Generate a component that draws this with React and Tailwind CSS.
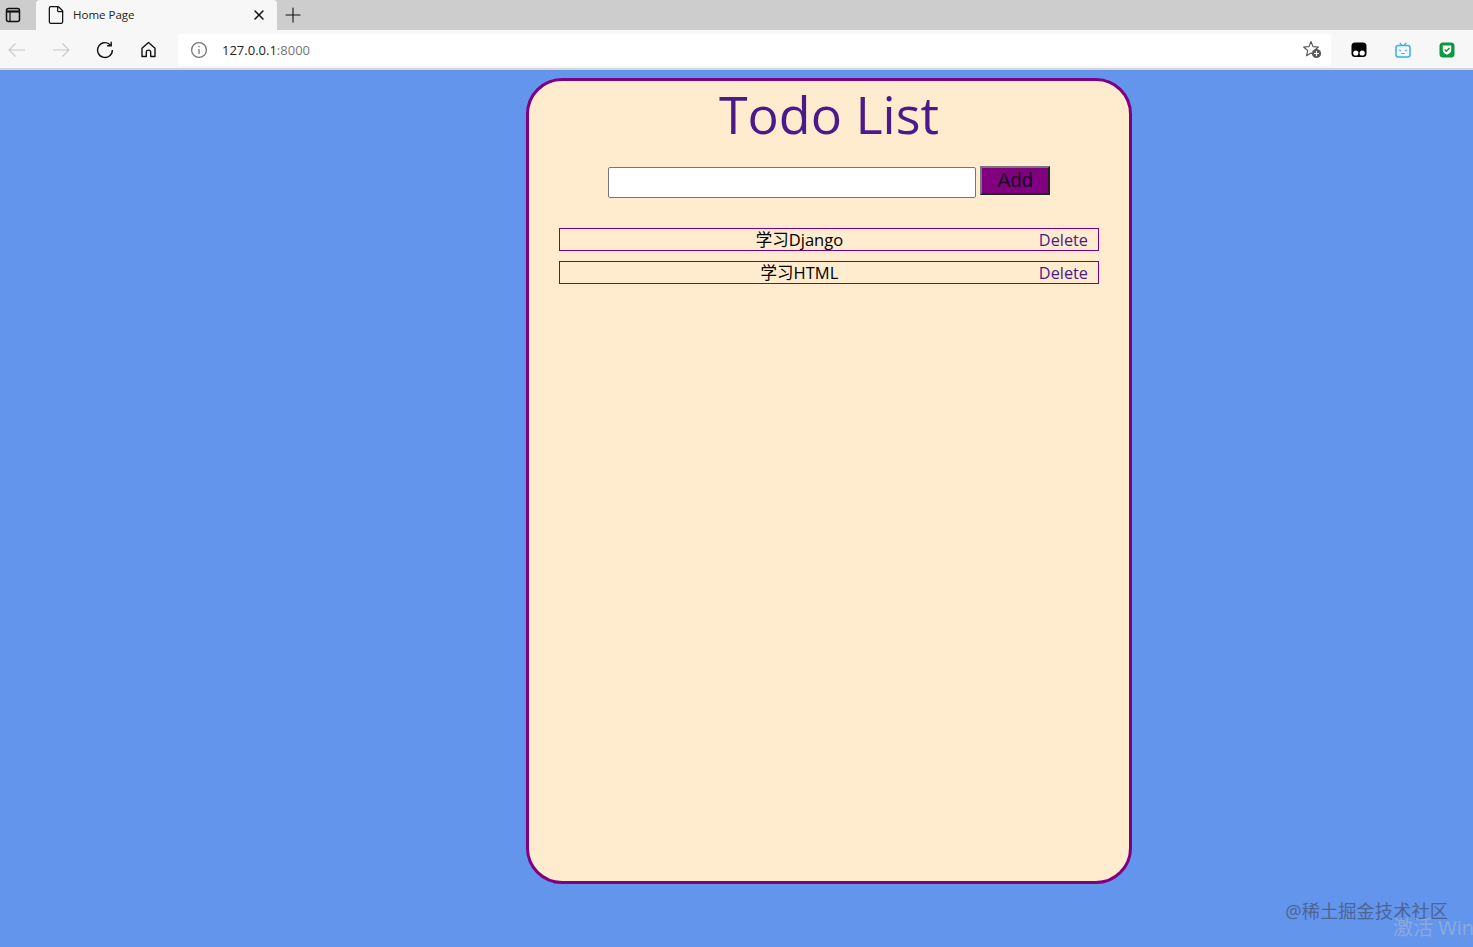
import React from 'react';
import { File, X, Plus } from 'lucide-react';

const cjk = "font-['Open_Sans','Noto_Sans_CJK_SC',sans-serif]";

const Tabs = () => (
  <div className="h-[30px] bg-[#cdcdcd] flex items-stretch">
    <div className="w-[36px] flex items-center pl-[5px]">
      <svg width="16" height="16" viewBox="0 0 16 16" fill="none" stroke="#111" strokeWidth="1.5">
        <rect x="1.5" y="1.5" width="13" height="13" rx="2" />
        <path d="M1.5 4.5h13" strokeWidth="2.2" />
        <path d="M5 5v9" strokeWidth="1.2" />
      </svg>
    </div>
    <div className="w-[241px] bg-[#f7f7f7] rounded-t-[4px] flex items-center pl-[10px] pr-[10px]">
      <File size={20} strokeWidth={1.5} color="#111" />
      <span className={`ml-[7px] flex-1 text-[11.5px] text-[#222] ${cjk}`}>Home Page</span>
      <X size={16} strokeWidth={2.2} color="#111" />
    </div>
    <div className="w-[34px] flex items-center justify-center pr-[2px]">
      <Plus size={24} strokeWidth={1.1} color="#111" />
    </div>
  </div>
);

const Toolbar = () => (
  <div className="h-[40px] pt-px bg-[#f7f7f7] border-b-2 border-[#d6d6d6] flex items-center">
    <div className="w-[178px] flex items-center pl-[8px]">
      <svg width="18" height="16" viewBox="0 0 18 16" fill="none" stroke="#c8c8c8" strokeWidth="1.1">
        <path d="M17 8H1M7.5 1.5 1 8l6.5 6.5" />
      </svg>
      <svg className="ml-[26px]" width="18" height="16" viewBox="0 0 18 16" fill="none" stroke="#c8c8c8" strokeWidth="1.1">
        <path d="M1 8h16M10.5 1.5 17 8l-6.5 6.5" />
      </svg>
      <svg className="ml-[26px]" width="18" height="18" viewBox="0 0 18 18" fill="none" stroke="#111" strokeWidth="1.4">
        <path d="M14.6 4.2A7.4 7.4 0 1 0 16.4 9" />
        <path d="M15.2 0.8v4h-4" />
      </svg>
      <svg className="ml-[26px]" width="17" height="17" viewBox="0 0 17 17" fill="none" stroke="#111" strokeWidth="1.4" strokeLinejoin="round">
        <path d="M8.5 1.5 2 7.2V15.5h4.3v-4.2a2.2 2.2 0 0 1 4.4 0v4.2H15V7.2z" />
      </svg>
    </div>
    <div className="w-[1153px] h-[32px] bg-white rounded-[3px] flex items-center pl-[12px] pr-[10px]">
      <svg width="18" height="18" viewBox="0 0 18 18" fill="none" stroke="#777" strokeWidth="1.3">
        <circle cx="9" cy="9" r="7.4" />
        <path d="M9 8v5M9 4.8v1.4" />
      </svg>
      <span className={`ml-[14px] mt-[2px] flex-1 text-[13px] text-[#222] ${cjk}`}>
        127.0.0.1<span className="text-[#777]">:8000</span>
      </span>
      <svg className="mr-[-1px]" width="19" height="19" viewBox="0 0 19 19" fill="none" stroke="#555" strokeWidth="1.1" strokeLinejoin="round">
        <path d="M8 1.5 10 6.6l5.4.4-4.1 3.5 1.2 5.3L8 13l-4.5 2.8 1.2-5.3L.6 7 6 6.6z" />
        <circle cx="13.5" cy="13.5" r="4.6" fill="#5a5a5a" stroke="none" />
        <path d="M13.5 11v5M11 13.5h5" stroke="#fff" strokeWidth="1.1" />
      </svg>
    </div>
    <div className="flex-1 flex items-center pl-[20px] gap-[28px]">
      <svg width="16" height="16" viewBox="0 0 16 16">
        <rect x="0.5" y="0.5" width="15" height="14.5" rx="3.5" fill="#000" />
        <circle cx="4.8" cy="11" r="2.6" fill="#fff" />
        <circle cx="11.2" cy="11" r="2.6" fill="#fff" />
      </svg>
      <svg width="16" height="16" viewBox="0 0 16 16" fill="none" stroke="#2fb4e8" strokeWidth="1.5">
        <rect x="1" y="3.5" width="14" height="11.5" rx="2.2" />
        <path d="M4.8 0.8 7 3.5M11.2 0.8 9 3.5M4 8l2 .8M12 8l-2 .8M6.3 11.5h3.4" strokeWidth="1.2" />
      </svg>
      <svg width="16" height="16" viewBox="0 0 16 16">
        <rect x="0.5" y="0.5" width="15" height="15" rx="3.5" fill="#0a9a3e" />
        <path d="M3.8 3.6h8.4v5c0 2-2.2 3.4-4.2 4.2-2-.8-4.2-2.2-4.2-4.2z" fill="#fff" />
        <path d="M5.6 7.4l1.8 1.8 3-3.2" fill="none" stroke="#0a9a3e" strokeWidth="1.4" />
      </svg>
    </div>
  </div>
);

const TodoRow = ({ name }) => (
  <div className="h-[23px] pt-[2px] border border-[#800080] flex items-center pr-[10px]">
    <span className={`flex-1 text-center text-[16.5px] text-black ${cjk}`}>{name}</span>
    <span className={`text-[16.3px] text-[#4b1a8a] ${cjk}`}>Delete</span>
  </div>
);

const App = () => (
  <div className="relative h-[947px] overflow-hidden bg-[#6495ed]">
    <Tabs />
    <Toolbar />
    <main className="ml-[526px] mt-[8px] w-[606px] h-[806px] bg-[#ffebcd] border-[3px] border-[#800080] rounded-[36px] flex flex-col items-center">
      <h1 className={`mt-[-1px] text-[52px] leading-[68px] text-[#4b1a8a] ${cjk}`}>Todo List</h1>
      <form className="mt-[18px] flex items-start">
        <input className="w-[368px] h-[31px] mt-[1px] bg-white border border-[#767676] rounded-[2px]" />
        <button type="button" className="ml-[4px] w-[70px] h-[29px] pb-[2px] bg-[#800080] border-2 border-t-[#777] border-l-[#777] border-r-[#222] border-b-[#222] text-[20px] leading-none text-[#1a0524] font-['Liberation_Sans',sans-serif]">
          Add
        </button>
      </form>
      <div className="mt-[30px] w-[540px] flex flex-col gap-[10px]">
        <TodoRow name="学习Django" />
        <TodoRow name="学习HTML" />
      </div>
    </main>
    <div className={`absolute right-[25px] bottom-[23px] text-[18.3px] text-[#4a6596] ${cjk}`}>@稀土掘金技术社区</div>
    <div className={`absolute right-0 bottom-[4px] w-[80px] overflow-hidden whitespace-nowrap text-[20px] text-[#8ba9dd] ${cjk}`}>激活 Win</div>
  </div>
);

export default App;
